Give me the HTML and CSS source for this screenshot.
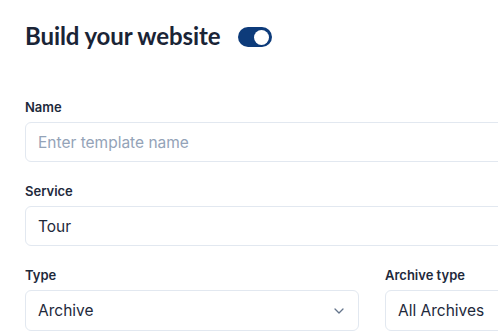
FILE: index.html
```html
<!DOCTYPE html>
<html lang="en">
<head>
<meta charset="utf-8">
<title>Build your website</title>
<link rel="stylesheet" href="styles.css">
</head>
<body>
<div class="page">
  <div class="title-row">
    <h1 class="title">Build your website</h1>
    <span class="toggle" role="switch" aria-checked="true"><span class="knob"></span></span>
  </div>
  <div class="field">
    <label class="label">Name</label>
    <div class="input placeholder">Enter template name</div>
  </div>
  <div class="field">
    <label class="label">Service</label>
    <div class="input">Tour</div>
  </div>
  <div class="row">
    <div class="field">
      <label class="label">Type</label>
      <div class="input select">
        <span>Archive</span>
        <svg class="chevron" width="10" height="6" viewBox="0 0 10 6"><path d="M1 1l4 4 4-4" fill="none" stroke="#64748b" stroke-width="1.3" stroke-linecap="round" stroke-linejoin="round"/></svg>
      </div>
    </div>
    <div class="field">
      <label class="label">Archive type</label>
      <div class="input select">
        <span>All Archives</span>
      </div>
    </div>
  </div>
</div>
</body>
</html>
```
FILE: styles.css
```css
html, body {
  margin: 0;
  padding: 0;
  background: #ffffff;
  overflow: hidden;
}
body {
  font-family: Inter, "Noto Sans", sans-serif;
  color: #1e293b;
}
.page {
  width: 760px;
  padding: 20px 0 0 25px;
}
.title-row {
  display: flex;
  align-items: center;
  gap: 18px;
  margin-bottom: 46px;
}
.title {
  margin: 0;
  font-family: Lato, sans-serif;
  font-weight: 700;
  font-size: 24px;
  line-height: 32px;
  color: #1a2436;
  letter-spacing: -0.1px;
}
.toggle {
  width: 34px;
  height: 20px;
  border-radius: 10px;
  background: #0d3b7a;
  display: flex;
  align-items: center;
  justify-content: flex-end;
  padding: 0 3px;
  box-sizing: border-box;
  margin-top: 2px;
}
.knob {
  width: 15px;
  height: 15px;
  border-radius: 50%;
  background: #ffffff;
}
.field {
  margin-bottom: 20px;
}
.label {
  display: block;
  font-size: 13px;
  line-height: 18px;
  font-weight: 600;
  color: #1e293b;
  margin-bottom: 6px;
}
.input {
  height: 40px;
  box-sizing: border-box;
  border: 1px solid #e2e8f0;
  border-radius: 6px;
  padding: 0 12px;
  display: flex;
  align-items: center;
  font-size: 15.5px;
  color: #1e293b;
}
.placeholder {
  color: #94a3b8;
}
.select {
  justify-content: space-between;
}
.chevron {
  margin-right: 2px;
}
.row {
  display: grid;
  grid-template-columns: 334px 1fr;
  gap: 26px;
}
.row .field {
  margin-bottom: 0;
}
.row .input {
  height: 41px;
}
```
